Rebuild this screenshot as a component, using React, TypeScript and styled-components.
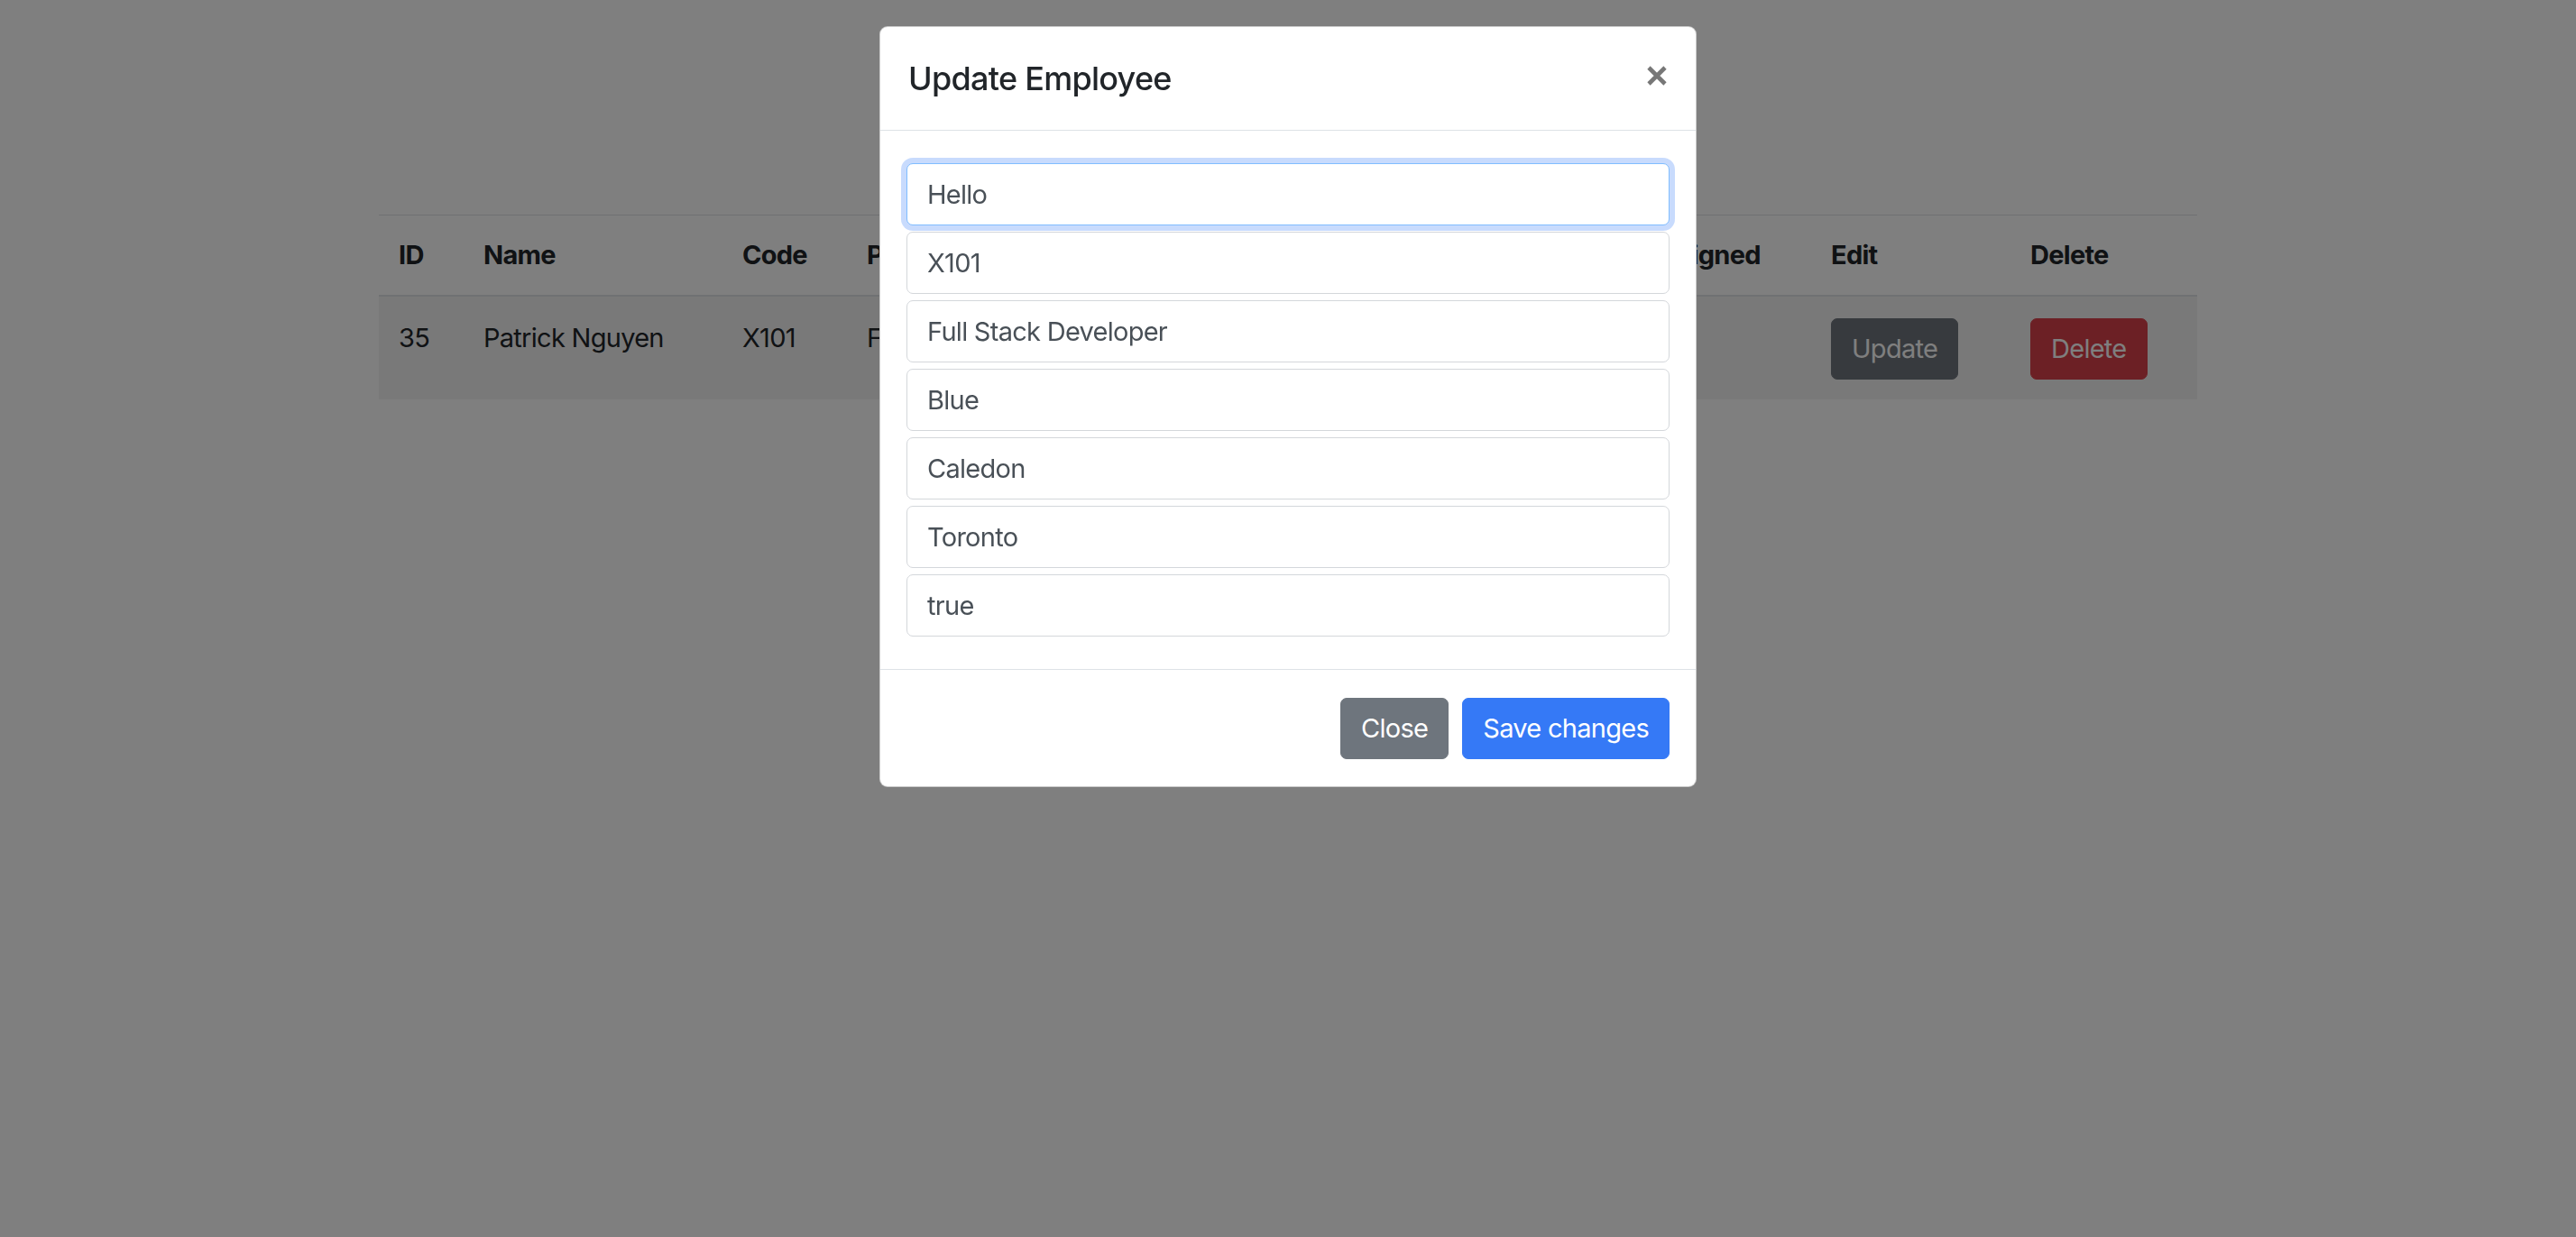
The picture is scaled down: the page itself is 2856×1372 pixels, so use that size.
import React from 'react';
import styled, { createGlobalStyle } from 'styled-components';

type Employee = {
  id: number;
  name: string;
  code: string;
  profession: string;
  color: string;
  city: string;
  branch: string;
  assigned: boolean;
};

const employee: Employee = {
  id: 35,
  name: 'Patrick Nguyen',
  code: 'X101',
  profession: 'Full Stack Developer',
  color: 'Blue',
  city: 'Caledon',
  branch: 'Toronto',
  assigned: true,
};

const columns = [
  { title: 'ID', width: 94 },
  { title: 'Name', width: 287 },
  { title: 'Code', width: 138 },
  { title: 'Profession', width: 330 },
  { title: 'Color', width: 160 },
  { title: 'City', width: 190 },
  { title: 'Branch', width: 183 },
  { title: 'Assigned', width: 206 },
  { title: 'Edit', width: 221 },
  { title: 'Delete', width: 207 },
];

const GlobalStyle = createGlobalStyle`
  html, body {
    margin: 0;
    padding: 0;
    background: #ffffff;
  }
  body {
    font-family: Inter, "Noto Sans", "Liberation Sans", sans-serif;
    font-size: 29px;
    line-height: 1.5;
    letter-spacing: -0.025em;
    color: #212529;
  }
  * {
    box-sizing: border-box;
  }
`;

const Page = styled.div`
  width: 2016px;
  margin: 0 auto;
  padding-top: 238px;
  min-height: 1372px;
`;

const Table = styled.table`
  width: 100%;
  table-layout: fixed;
  border-collapse: collapse;
  color: #212529;
`;

const HeadCell = styled.th`
  text-align: left;
  font-weight: 700;
  padding: 22px;
  border-top: 1px solid #dee2e6;
  border-bottom: 2px solid #dee2e6;
  white-space: nowrap;
  overflow: hidden;
`;

const Row = styled.tr`
  background: #f2f2f2;
`;

const Cell = styled.td`
  padding: 24px 22px 22px;
  border-top: 1px solid #dee2e6;
  vertical-align: top;
  white-space: nowrap;
  overflow: hidden;
`;

const Button = styled.button<{ $variant: 'primary' | 'secondary' | 'danger' }>`
  display: inline-block;
  font-family: inherit;
  font-size: 29px;
  line-height: 1.5;
  letter-spacing: inherit;
  font-weight: 400;
  height: 68px;
  padding: 0 22px;
  border-radius: 7px;
  border: 1px solid transparent;
  color: #ffffff;
  cursor: pointer;
  background: ${p =>
    p.$variant === 'primary' ? '#3579f6' : p.$variant === 'danger' ? '#d9414b' : '#6e757d'};
  border-color: ${p =>
    p.$variant === 'primary' ? '#3579f6' : p.$variant === 'danger' ? '#d9414b' : '#6e757d'};
`;

const Backdrop = styled.div`
  position: fixed;
  inset: 0;
  background: rgba(0, 0, 0, 0.5);
`;

const ModalWrap = styled.div`
  position: fixed;
  inset: 0;
  display: flex;
  justify-content: center;
  align-items: flex-start;
  padding-top: 29px;
`;

const ModalContent = styled.div`
  width: 906px;
  background: #ffffff;
  border: 1px solid rgba(0, 0, 0, 0.2);
  border-radius: 9px;
  display: flex;
  flex-direction: column;
`;

const ModalHeader = styled.div`
  display: flex;
  align-items: flex-start;
  justify-content: space-between;
  padding: 30px 29px 30px 31px;
  border-bottom: 1px solid #dee2e6;
`;

const Title = styled.h5`
  margin: 0;
  font-size: 36px;
  font-weight: 500;
  line-height: 54px;
  color: #212529;
`;

const CloseX = styled.button`
  border: 0;
  background: transparent;
  padding: 0;
  margin: 13px 3px 0 0;
  width: 22px;
  height: 22px;
  cursor: pointer;
  display: flex;
`;

const ModalBody = styled.div`
  padding: 29px;
`;

const Field = styled.input<{ $focused?: boolean }>`
  display: block;
  width: 100%;
  height: 69px;
  margin: 7px 0;
  padding: 0 22px;
  font-family: inherit;
  font-size: 29px;
  letter-spacing: inherit;
  color: #495057;
  background: #ffffff;
  border: 1px solid ${p => (p.$focused ? '#80bdff' : '#d4d7db')};
  border-radius: 7px;
  outline: none;
  box-shadow: ${p => (p.$focused ? '0 0 0 6px rgba(53, 121, 246, 0.27)' : 'none')};
`;

const ModalFooter = styled.div`
  display: flex;
  justify-content: flex-end;
  align-items: center;
  gap: 15px;
  padding: 31px 29px 30px;
  border-top: 1px solid #dee2e6;
`;

const CloseIcon = () => (
  <svg width="22" height="22" viewBox="0 0 22 22">
    <path d="M2 2L20 20M20 2L2 20" stroke="#777777" strokeWidth="4.6" />
  </svg>
);

const App = () => {
  const values = [
    'Hello',
    employee.code,
    employee.profession,
    employee.color,
    employee.city,
    employee.branch,
    String(employee.assigned),
  ];

  return (
    <>
      <GlobalStyle />
      <Page>
        <Table>
          <colgroup>
            {columns.map(c => (
              <col key={c.title} style={{ width: c.width }} />
            ))}
          </colgroup>
          <thead>
            <tr>
              {columns.map(c => (
                <HeadCell key={c.title}>{c.title}</HeadCell>
              ))}
            </tr>
          </thead>
          <tbody>
            <Row>
              <Cell>{employee.id}</Cell>
              <Cell>{employee.name}</Cell>
              <Cell>{employee.code}</Cell>
              <Cell>{employee.profession}</Cell>
              <Cell>{employee.color}</Cell>
              <Cell>{employee.city}</Cell>
              <Cell>{employee.branch}</Cell>
              <Cell>{String(employee.assigned)}</Cell>
              <Cell>
                <Button $variant="secondary">Update</Button>
              </Cell>
              <Cell>
                <Button $variant="danger">Delete</Button>
              </Cell>
            </Row>
          </tbody>
        </Table>
      </Page>
      <Backdrop />
      <ModalWrap>
        <ModalContent>
          <ModalHeader>
            <Title>Update Employee</Title>
            <CloseX aria-label="Close">
              <CloseIcon />
            </CloseX>
          </ModalHeader>
          <ModalBody>
            {values.map((v, idx) => (
              <Field key={idx} $focused={idx === 0} defaultValue={v} />
            ))}
          </ModalBody>
          <ModalFooter>
            <Button $variant="secondary">Close</Button>
            <Button $variant="primary">Save changes</Button>
          </ModalFooter>
        </ModalContent>
      </ModalWrap>
    </>
  );
};

export default App;
